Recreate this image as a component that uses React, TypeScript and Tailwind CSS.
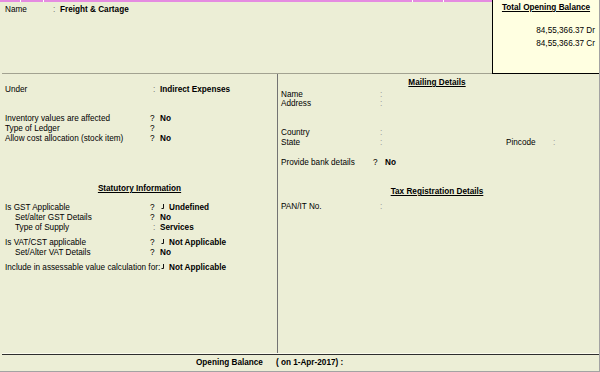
import React from "react";

// small "┘" style marker Tally draws before list values
const Hook = () => (
  <svg width="4" height="6" viewBox="0 0 4 6" className="block mt-[1px]">
    <path d="M2.5 0V4.5H0.5" stroke="#111" strokeWidth="1" fill="none" />
  </svg>
);

type RowProps = {
  label: string;
  sym?: string;
  hook?: boolean;
  value?: string;
  indent?: boolean;
  className?: string;
};

const LeftRow = ({ label, sym, hook, value, indent, className = "" }: RowProps) => (
  <div className={`flex h-[10px] leading-[10px] whitespace-nowrap ${className}`}>
    <span className={`w-[145px] shrink-0 ${indent ? "pl-[10px]" : ""}`}>{label}</span>
    <span className={`w-[10px] shrink-0 ${sym === ":" ? "pl-[3px] text-[#777]" : ""}`}>{sym}</span>
    {hook && (
      <span className="w-[9px] shrink-0 pl-[1px]">
        <Hook />
      </span>
    )}
    {value && <span className="font-bold">{value}</span>}
  </div>
);

const RightRow = ({ label, className = "" }: { label: string; className?: string }) => (
  <div className={`flex h-[9px] leading-[9px] ${className}`}>
    <span className="w-[99px] shrink-0">{label}</span>
    <span className="text-[#999]">:</span>
  </div>
);

export default function App() {
  return (
    <div
      className="w-[600px] h-[372px] bg-[#ECEED6] text-[8.2px] text-black border-r border-b border-[#a3a3a3] flex flex-col overflow-hidden whitespace-nowrap"
      style={{ fontFamily: "'Liberation Sans', Arial, sans-serif" }}
    >
      {/* top area */}
      <div className="flex h-[74px] shrink-0">
        <div className="flex-1 flex flex-col">
          <div className="h-[2px] bg-[#E58BE1] flex">
            <span className="w-[20px]" />
            <span className="w-[1px] bg-white" />
            <span className="w-[22px]" />
            <span className="w-[1px] bg-white" />
            <span className="w-[368px]" />
            <span className="w-[1px] bg-white" />
            <span className="w-[30px]" />
            <span className="w-[1px] bg-white" />
          </div>
          <div className="flex-1 ml-[2px] pl-[3px] pt-[3px] border-b border-[#a2a291]">
            <div className="flex h-[10px] leading-[10px]">
              <span className="w-[48px]">Name</span>
              <span className="w-[7px] text-[#777]">:</span>
              <span className="font-bold">Freight &amp; Cartage</span>
            </div>
          </div>
        </div>
        <div className="w-[107px] bg-[#FFFFE1] border-l border-b border-black pt-[3px] pr-[4px]">
          <div className="h-[10px] leading-[10px] text-center font-bold underline underline-offset-[1px] pl-[4px]">
            Total Opening Balance
          </div>
          <div className="mt-[13px] h-[10px] leading-[10px] text-right">84,55,366.37 Dr</div>
          <div className="mt-[3px] h-[10px] leading-[10px] text-right">84,55,366.37 Cr</div>
        </div>
      </div>

      {/* body */}
      <div className="flex h-[280px] shrink-0 ml-[2px] border-b border-[#fbfbee]">
        <div className="w-[276px] shrink-0 border-r border-[#737373] pl-[3px] pt-[11px]">
          <LeftRow label="Under" sym=":" value="Indirect Expenses" />
          <LeftRow className="mt-[19px]" label="Inventory values are affected" sym="?" value="No" />
          <LeftRow label="Type of Ledger" sym="?" />
          <LeftRow label="Allow cost allocation (stock item)" sym="?" value="No" />

          <div className="mt-[40px] h-[10px] leading-[10px] text-center font-bold underline underline-offset-[1px] pr-[3px]">
            Statutory Information
          </div>
          <LeftRow className="mt-[9px]" label="Is GST Applicable" sym="?" hook value="Undefined" />
          <LeftRow indent label="Set/alter GST Details" sym="?" value="No" />
          <LeftRow indent label="Type of Supply" sym=":" value="Services" />
          <LeftRow className="mt-[5px]" label="Is VAT/CST applicable" sym="?" hook value="Not Applicable" />
          <LeftRow indent label="Set/Alter VAT Details" sym="?" value="No" />
          <div className="mt-[5px] flex h-[10px] leading-[10px]">
            <span className="w-[155px] shrink-0">Include in assessable value calculation for:</span>
            <span className="w-[9px] shrink-0 pl-[1px]">
              <Hook />
            </span>
            <span className="font-bold">Not Applicable</span>
          </div>
        </div>

        <div className="flex-1 pl-[3px] pt-[4px]">
          <div className="h-[10px] leading-[10px] text-center font-bold underline underline-offset-[1px] pr-[6px]">
            Mailing Details
          </div>
          <RightRow className="mt-[2px]" label="Name" />
          <RightRow label="Address" />
          <RightRow className="mt-[20px] h-[10px] leading-[10px]" label="Country" />
          <div className="flex h-[10px] leading-[10px]">
            <span className="w-[99px] shrink-0">State</span>
            <span className="w-[126px] shrink-0 text-[#999]">:</span>
            <span className="w-[47px] shrink-0">Pincode</span>
            <span className="text-[#999]">:</span>
          </div>
          <div className="mt-[10px] flex h-[10px] leading-[10px]">
            <span className="w-[92px] shrink-0">Provide bank details</span>
            <span className="w-[12px] shrink-0">?</span>
            <span className="font-bold">No</span>
          </div>
          <div className="mt-[19px] h-[10px] leading-[10px] text-center font-bold underline underline-offset-[1px] pr-[6px]">
            Tax Registration Details
          </div>
          <RightRow className="mt-[5px] h-[10px] leading-[10px]" label="PAN/IT No." />
        </div>
      </div>

      {/* footer */}
      <div className="flex-1 ml-[2px] border-t border-[#2e2e2e] flex items-center pl-[194px] font-bold">
        <span>Opening Balance</span>
        <span className="ml-[13px]">( on 1-Apr-2017) :</span>
      </div>
    </div>
  );
}
